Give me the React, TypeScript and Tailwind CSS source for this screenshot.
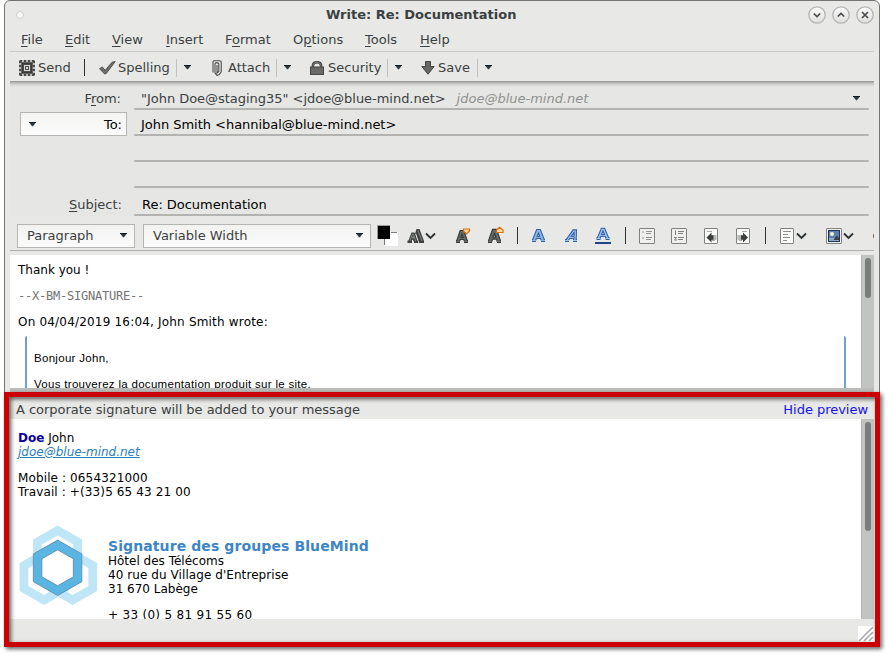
import React from "react";

const menus = [
  { pre: "", key: "F", post: "ile", w: "w-[44px]" },
  { pre: "", key: "E", post: "dit", w: "w-[47px]" },
  { pre: "", key: "V", post: "iew", w: "w-[54px]" },
  { pre: "", key: "I", post: "nsert", w: "w-[59px]" },
  { pre: "F", key: "o", post: "rmat", w: "w-[68px]" },
  { pre: "O", key: "p", post: "tions", w: "w-[72px]" },
  { pre: "", key: "T", post: "ools", w: "w-[55px]" },
  { pre: "", key: "H", post: "elp", w: "w-[40px]" },
];

function Key({ children }: { children: React.ReactNode }) {
  return <span className="underline decoration-1 underline-offset-2">{children}</span>;
}

function Caret({ className = "" }: { className?: string }) {
  return (
    <svg className={`h-[5px] w-[7px] shrink-0 ${className}`} viewBox="0 0 7 5">
      <path d="M0 0.3H7L4 4.2H3Z" fill="#2c3940" />
      <path d="M0 0.5H7" stroke="#111a20" />
    </svg>
  );
}

function Chevron() {
  return (
    <svg className="h-[8px] w-[11px] shrink-0" viewBox="0 0 11 8">
      <path d="M1 1.5L5.5 6L10 1.5" fill="none" stroke="#2c3236" strokeWidth="1.9" />
    </svg>
  );
}

function WindowButton({ children }: { children: React.ReactNode }) {
  return (
    <svg className="size-[18px]" viewBox="0 0 18 18">
      <defs>
        <linearGradient id="knob" x1="0" y1="0" x2="0" y2="1">
          <stop offset="0" stopColor="#fbfbfb" />
          <stop offset="1" stopColor="#dededd" />
        </linearGradient>
      </defs>
      <circle cx="9" cy="9" r="8.2" fill="url(#knob)" stroke="#b5b5b4" strokeWidth="1.3" />
      <g fill="none" stroke="#494c4c" strokeWidth="1.7">{children}</g>
    </svg>
  );
}

function SendIcon() {
  return (
    <svg className="size-[16px]" viewBox="0 0 16 16">
      <path
        d="M2 0V3M6 0V3M10 0V3M14 0V3M2 13V16M6 13V16M10 13V16M14 13V16M0 2H3M0 6H3M0 10H3M0 14H3M13 2H16M13 6H16M13 10H16M13 14H16"
        stroke="#4a4b48"
        strokeWidth="2.6"
      />
      <rect x="2" y="2" width="12" height="12" fill="#62635f" />
      <rect x="3.5" y="3.5" width="9" height="9" fill="#4a4b48" stroke="#3a3b39" />
      <rect x="5.5" y="5.5" width="5" height="5" fill="#4a4b48" stroke="#dcdcd8" />
      <rect x="7" y="7" width="2" height="2" fill="#d8d8d5" />
    </svg>
  );
}

function CheckIcon() {
  return (
    <svg className="h-[14px] w-[17px]" viewBox="0 0 17 14">
      <path d="M0.5 7.7L3.3 5.9L6.2 9.3L13 1.2L16.3 0.5L7 12.8H5.4Z" fill="#6d6e6c" stroke="#424341" strokeWidth="0.8" />
    </svg>
  );
}

function ClipIcon() {
  return (
    <svg className="h-[16px] w-[10px]" viewBox="0 0 10 16">
      <path d="M1 12.5V1.8Q1 0.8 2 0.8H7.5Q9.2 0.8 9.2 2.2V12L7 14.8L5 15.3L3 13V4Q3 2.9 4 2.9H5.4Q6.8 2.9 6.8 4V11.5L5 13V5" fill="none" stroke="#4a4b49" strokeWidth="1.1" />
    </svg>
  );
}

function LockIcon() {
  return (
    <svg className="h-[14px] w-[14px]" viewBox="0 0 14 14">
      <path d="M2.9 7V4.6Q3.2 1.3 7 1.3T11.1 4.6V7" fill="none" stroke="#454644" strokeWidth="2.6" />
      <path d="M2.9 7V4.6Q3.2 1.3 7 1.3T11.1 4.6V7" fill="none" stroke="#81827f" strokeWidth="0.8" />
      <rect x="0.5" y="6" width="13" height="7.5" fill="#6a6b69" stroke="#454644" />
    </svg>
  );
}

function SaveIcon() {
  return (
    <svg className="h-[14px] w-[14px]" viewBox="0 0 14 14">
      <path d="M4.5 0.5H9.5V5.5H13.2L7 13.2L0.8 5.5H4.5Z" fill="#686967" stroke="#424341" />
    </svg>
  );
}

function ToolSep() {
  return <div className="h-[18px] w-px shrink-0 bg-[#c1c1bf]" />;
}

function FieldLine() {
  return <div className="h-[2px] w-full shrink-0 rounded-sm bg-[#b3b3b1]" />;
}

type LetterKind = "sizes" | "smaller" | "larger" | "bold" | "italic" | "underline";

/* A slab-footed glyph: dark outline with a lighter inner stroke. */
function Glyph({ x, y, w, h, dark, light, slant = 0, weight = 4 }: { x: number; y: number; w: number; h: number; dark: string; light: string; slant?: number; weight?: number }) {
  const mid = x + w / 2 + slant;
  const foot = y + h;
  const legs = `M${x + 2} ${foot}L${mid - 0.8} ${y}H${mid + 0.8}L${x + w - 2} ${foot}`;
  const rest = `M${x + w * 0.28} ${y + h * 0.68}H${x + w * 0.74}M${x} ${foot}H${x + 4}M${x + w - 4} ${foot}H${x + w}`;
  return (
    <g fill="none">
      <path d={legs} stroke={dark} strokeWidth={weight} />
      <path d={rest} stroke={dark} strokeWidth="3" />
      <path d={legs} stroke={light} strokeWidth={weight - 2.2} />
      <path d={rest} stroke={light} strokeWidth="1" />
    </g>
  );
}

function LetterIcon({ kind }: { kind: LetterKind }) {
  return (
    <svg className="h-[20px] w-[18px] shrink-0" viewBox="0 0 18 20">
      {kind === "sizes" && (
        <>
          <path d="M6 15L9.5 3H12.5L17 15V17H11Z" fill="#3f4241" />
          <path d="M11 4.5L15 15" stroke="#727674" strokeWidth="1.4" />
          <path d="M8.6 8L11.5 17" stroke="#e8e8e6" strokeWidth="1.2" />
          <path d="M0.5 17V14.5H1.5L4.5 6.5H7.5L10.2 14.5H11V17H7V14H5V17Z" fill="#3f4241" />
          <path d="M3 15L5.5 8H6.3L8.6 15" fill="none" stroke="#7d817f" />
          <path d="M5.4 12.2L6 10L6.7 12.2Z" fill="#e8e8e6" />
        </>
      )}
      {kind === "smaller" && (
        <>
          <Glyph x={2} y={6} w={12} h={9.5} dark="#353837" light="#666a68" />
          <path d="M9.5 3H15.5V5L12.5 8L9.5 5Z" fill="#fbd9a8" stroke="#e06c0c" strokeWidth="1.2" />
        </>
      )}
      {kind === "larger" && (
        <>
          <Glyph x={2} y={5} w={13} h={10.5} dark="#353837" light="#666a68" weight={4.4} />
          <path d="M10.5 6.5V4L13.5 1.3L17 4V6.5Z" fill="#fbd9a8" stroke="#e06c0c" strokeWidth="1.2" />
        </>
      )}
      {kind === "bold" && <Glyph x={2} y={5} w={13} h={9.5} dark="#2f61a8" light="#8fb4e4" weight={4.2} />}
      {kind === "italic" && <Glyph x={2} y={5} w={12} h={9.5} dark="#2f61a8" light="#a3c3ea" slant={3.5} weight={3.4} />}
      {kind === "underline" && (
        <>
          <Glyph x={2.5} y={3.5} w={13} h={9} dark="#2f61a8" light="#a3c3ea" weight={3.6} />
          <rect x="1" y="16" width="16" height="2" fill="#1c4584" />
        </>
      )}
    </svg>
  );
}

function PageIcon({ kind }: { kind: "bullets" | "numbers" | "outdent" | "indent" | "align" | "image" }) {
  const wide = kind === "bullets" || kind === "numbers" || kind === "image";
  return (
    <svg className="size-[16px] shrink-0" viewBox="0 0 16 16">
      <rect x={wide ? 0.5 : 1.5} y="0.5" width={wide ? 15 : 13} height="15" rx="0.5" fill={wide ? "#f0f1ee" : "#fbfbfa"} stroke="#80827f" />
      {kind === "bullets" && <path d="M3 4H5M3 10H5M7 3.5H13M7 5.5H12M7 9.5H13M7 11.5H12" stroke="#8f918e" />}
      {kind === "numbers" && <path d="M4.5 2.5V7M3 9.5H5.5L3.5 12H6M7 3.5H13M7 5.5H12M7 9.5H13M7 11.5H12" fill="none" stroke="#80827f" />}
      {kind === "outdent" && (
        <>
          <path d="M4 3.5H9M9 12.5H12" stroke="#aaa" />
          <path d="M9 7H13.5V12H9Z" fill="#b9b9b8" />
          <path d="M3.5 9.5L8.5 4.5V7.3H10.5V11.7H8.5V14.5Z" fill="#3c3e3d" />
        </>
      )}
      {kind === "indent" && (
        <>
          <path d="M7 3.5H12M4 12.5H7" stroke="#aaa" />
          <path d="M2.5 7H7V12H2.5Z" fill="#b9b9b8" />
          <path d="M13 9.5L8 4.5V7.3H6V11.7H8V14.5Z" fill="#3c3e3d" />
        </>
      )}
      {kind === "align" && <path d="M4 3.5H12M4 6.5H9M4 9.5H11M4 12.5H8" stroke="#8c8e8b" />}
      {kind === "image" && (
        <>
          <rect x="2.5" y="2.5" width="11" height="11" fill="#5c7fae" stroke="#1f3557" />
          <rect x="3" y="10" width="10" height="3" fill="#93a8c6" />
          <circle cx="6" cy="6" r="2" fill="#f8f7c8" />
          <path d="M8 11L11 7.5L13 10V12H8Z" fill="#3b4148" />
        </>
      )}
    </svg>
  );
}

function Scroll({ thumb }: { thumb: string }) {
  return (
    <div className="flex w-[13px] shrink-0 justify-center border-l border-[#b2b4b2] bg-[#c2c4c2] pt-[3px]">
      <div className={`w-[6px] rounded-full bg-[#787d7c] ${thumb}`} />
    </div>
  );
}

const hex = (cx: number, cy: number, r: number) => {
  const x = r * 0.875;
  return `M${cx} ${cy - r}L${cx + x} ${cy - r / 2}V${cy + r / 2}L${cx} ${cy + r}L${cx - x} ${cy + r / 2}V${cy - r / 2}Z`;
};

function Logo() {
  return (
    <svg className="mt-[2px] h-[82px] w-[80px] shrink-0" viewBox="18 524 80 82">
      <g fill="#bfe6f6" fillRule="evenodd">
        <path d={hex(57.6, 553.4, 28) + hex(57.6, 553.4, 18)} />
        <path d={hex(44.1, 577, 28) + hex(44.1, 577, 18)} />
        <path d={hex(72.6, 577, 28) + hex(72.6, 577, 18)} />
      </g>
      <path d={hex(57.6, 567.8, 18)} fill="#fff" />
      <path d={hex(57.6, 567.8, 27.7) + hex(57.6, 567.8, 18)} fill="#5bb5e2" fillRule="evenodd" stroke="#5b8fae" strokeWidth="0.9" />
    </svg>
  );
}

export default function App() {
  return (
    <div className="relative h-[655px] w-[888px] overflow-hidden bg-white pl-[4px] font-['DejaVu_Sans',sans-serif] text-[13px] whitespace-pre text-[#3a3f41]">
      <div className="flex h-[645px] w-[876px] flex-col rounded-t-[6px] border border-[#747472] bg-[#e8e8e6] px-[5px]">
        <header className="flex h-[27px] shrink-0 items-center">
          <div className="ml-[6px] size-[8px] rounded-full border border-[#cececd] bg-[#fafafa]" />
          <h1 className="ml-[302px] flex-1 font-bold">Write: Re: Documentation</h1>
          <div className="flex gap-[6px]">
            <WindowButton><path d="M5.8 7.5L9 10.5L12.2 7.5" /></WindowButton>
            <WindowButton><path d="M5.8 10.5L9 7.5L12.2 10.5" /></WindowButton>
            <WindowButton><path d="M6 6L12 12M12 6L6 12" /></WindowButton>
          </div>
        </header>

        <nav className="flex h-[24px] shrink-0 items-center border-b border-[#cbcbc9] pl-[11px]">
          {menus.map((m) => (
            <span key={m.post} className={m.w}>{m.pre}<Key>{m.key}</Key>{m.post}</span>
          ))}
        </nav>

        <div className="flex h-[29px] shrink-0 items-center pt-[2px] pl-[9px]">
          <SendIcon />
          <span className="ml-[3px] w-[46px]">Send</span>
          <div className="h-[17px] w-px bg-[#2e3234]" />
          <div className="ml-[14px]"><CheckIcon /></div>
          <span className="ml-[2px] w-[58px]">Spelling</span>
          <ToolSep />
          <Caret className="ml-[7px]" />
          <div className="ml-[21px]"><ClipIcon /></div>
          <span className="ml-[6px] w-[48px]">Attach</span>
          <ToolSep />
          <Caret className="ml-[7px]" />
          <div className="ml-[19px]"><LockIcon /></div>
          <span className="ml-[4px] w-[59px]">Security</span>
          <ToolSep />
          <Caret className="ml-[7px]" />
          <div className="ml-[19px]"><SaveIcon /></div>
          <span className="ml-[3px] w-[39px]">Save</span>
          <ToolSep />
          <Caret className="ml-[7px]" />
        </div>

        <div className="h-[6px] shrink-0 bg-linear-to-b from-[#959593] via-[#cfcfcd] to-[#e6e6e4]" />

        <section className="flex h-[129px] shrink-0 bg-[#e6e6e4]">
          <div className="flex w-[124px] shrink-0 flex-col pl-[10px]">
            <div className="mt-[3px] h-[21px] pr-[13px] text-right leading-[18px]">F<Key>r</Key>om:</div>
            <div className="mt-px flex h-[24px] w-[107px] items-center border border-[#b5b5b3] bg-linear-to-b from-[#f4f4f3] to-[#fcfcfc] pr-[4px] pl-[8px] text-black">
              <Caret />
              <span className="flex-1 pt-[2px] text-right">To:</span>
            </div>
            <div className="mt-[59px] pr-[12px] text-right leading-[20px]"><Key>S</Key>ubject:</div>
          </div>
          <div className="flex w-[735px] flex-col text-black">
            <div className="flex h-[21px] items-center pt-[2px] pr-[9px] pl-[7px] text-[#3a3f41]">
              <span className="tracking-[-0.03px]">"John Doe@staging35" &lt;jdoe@blue-mind.net&gt;</span>
              <span className="ml-[11px] flex-1 text-[#8f9190] italic">jdoe@blue-mind.net</span>
              <Caret />
            </div>
            <FieldLine />
            <div className="flex h-[24px] items-center pt-[6px] pl-[7px] tracking-[-0.03px]">John Smith &lt;hannibal@blue-mind.net&gt;</div>
            <FieldLine />
            <div className="h-[24px]" />
            <FieldLine />
            <div className="h-[24px]" />
            <FieldLine />
            <div className="flex h-[26px] items-center pt-[8px] pl-[8px] tracking-[-0.03px]">Re: Documentation</div>
            <FieldLine />
          </div>
        </section>

        <div className="flex h-[35px] shrink-0 items-center overflow-hidden border-b border-[#b0b0ae] pt-[5px] pl-[7px]">
          <div className="flex h-[24px] w-[118px] shrink-0 items-center justify-between border border-[#b5b5b3] bg-linear-to-b from-[#f2f2f1] to-[#fbfbfb] pr-[7px] pl-[9px]">
            <span>Paragraph</span>
            <Caret />
          </div>
          <div className="ml-[8px] flex h-[24px] w-[228px] shrink-0 items-center justify-between border border-[#b5b5b3] bg-linear-to-b from-[#f2f2f1] to-[#fbfbfb] pr-[7px] pl-[9px]">
            <span>Variable Width</span>
            <Caret />
          </div>
          <svg className="ml-[6px] h-[22px] w-[21px] shrink-0" viewBox="0 0 21 22" shapeRendering="crispEdges">
            <rect x="7" y="7" width="14" height="14" fill="#fff" />
            <path d="M14 7.5H20M7.5 14V20" stroke="#777" />
            <rect x="0" y="0" width="13" height="14" fill="#999" />
            <rect x="1" y="1" width="12" height="13" fill="#000" />
          </svg>
          <div className="ml-[9px] flex items-center"><LetterIcon kind="sizes" /><Chevron /></div>
          <div className="ml-[18px]"><LetterIcon kind="smaller" /></div>
          <div className="ml-[14px]"><LetterIcon kind="larger" /></div>
          <div className="ml-[13px] h-[17px] w-px shrink-0 bg-[#2e3234]" />
          <div className="ml-[12px]"><LetterIcon kind="bold" /></div>
          <div className="ml-[15px]"><LetterIcon kind="italic" /></div>
          <div className="ml-[13px]"><LetterIcon kind="underline" /></div>
          <div className="ml-[13px] h-[17px] w-px shrink-0 bg-[#2e3234]" />
          <div className="ml-[13px] flex gap-[16px]">
            <PageIcon kind="bullets" />
            <PageIcon kind="numbers" />
            <PageIcon kind="outdent" />
            <PageIcon kind="indent" />
          </div>
          <div className="ml-[14px] h-[17px] w-px shrink-0 bg-[#2e3234]" />
          <div className="ml-[13px] flex items-center gap-px"><PageIcon kind="align" /><Chevron /></div>
          <div className="ml-[19px] flex items-center gap-px"><PageIcon kind="image" /><Chevron /></div>
          <div className="ml-[19px] h-[6px] w-[3px] shrink-0 rounded-l bg-[#7c5a3a]" />
        </div>

        <main className="mt-[4px] flex h-[133px] shrink-0 bg-white text-[12px] text-black">
          <div className="flex-1 overflow-hidden pt-[8px] pr-[15px] pl-[8px] leading-[14px]">
            <p>Thank you !</p>
            <p className="mt-[12px] font-['DejaVu_Sans_Mono',monospace] tracking-[-0.22px] text-[#737373]">--X-BM-SIGNATURE--</p>
            <p className="mt-[12px] tracking-[0.19px]">On 04/04/2019 16:04, John Smith wrote:</p>
            <div className="mt-[7px] ml-[7px] h-[80px] rounded-[2px] border-x-2 border-[#729fcf] pt-[15px] pl-[7px] font-['Liberation_Sans',sans-serif] text-[11.5px] leading-[14px] tracking-[0.3px]">
              <p>Bonjour John,</p>
              <p className="mt-[12px]">Vous trouverez la documentation produit sur le site.</p>
            </div>
          </div>
          <Scroll thumb="h-[40px]" />
        </main>

        <div className="h-[9px] shrink-0 bg-[#bbbbb9]" />
        <div className="flex h-[22px] shrink-0 items-center justify-between pt-[3px] pr-[6px] pl-[6px] tracking-[-0.03px]">
          <span>A corporate signature will be added to your message</span>
          <a className="text-[#1414e6]">Hide preview</a>
        </div>

        <section className="flex h-[200px] shrink-0 bg-white text-[12px] text-black">
          <div className="flex-1 overflow-hidden pt-[12px] pl-[8px] leading-[14px]">
            <p><b className="text-[#0a009e]">Doe</b> John</p>
            <p className="text-[#2a80b9] italic underline">jdoe@blue-mind.net</p>
            <p className="mt-[12px] tracking-[0.12px]">Mobile : 0654321000</p>
            <p className="tracking-[0.12px]">Travail : +(33)5 65 43 21 00</p>
            <div className="mt-[23px] flex">
              <Logo />
              <div className="ml-[10px] pt-[16px]">
                <p className="text-[14px] leading-[16px] font-bold tracking-[0.1px] text-[#3d85c6]">Signature des groupes BlueMind</p>
                <p>Hôtel des Télécoms</p>
                <p className="tracking-[0.07px]">40 rue du Village d'Entreprise</p>
                <p>31 670 Labège</p>
                <p className="mt-[12px] tracking-[0.3px]">+ 33 (0) 5 81 91 55 60</p>
              </div>
            </div>
          </div>
          <Scroll thumb="h-[109px]" />
        </section>

        <footer className="flex flex-1 items-start justify-end pt-[7px]">
          <svg className="h-[16px] w-[16px] bg-white" viewBox="0 0 16 16">
            <path d="M1 15L15 1M6 15L15 6M11 15L15 11" stroke="#a9a9a9" strokeWidth="1.6" />
          </svg>
        </footer>
      </div>
      <div className="absolute top-[392px] left-[4px] h-[255px] w-[876px] border-5 border-[#cc0000] drop-shadow-[2px_2px_2px_rgba(0,0,0,0.65)]" />
    </div>
  );
}
